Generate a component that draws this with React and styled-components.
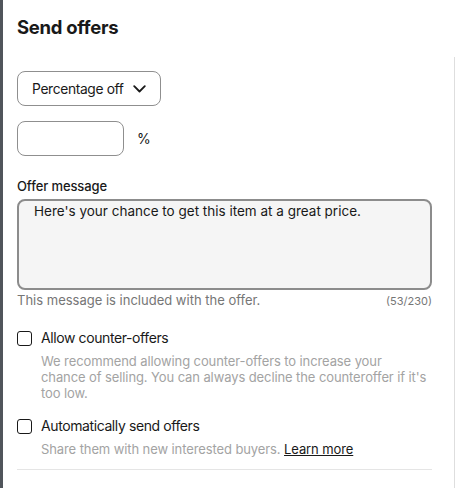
import React from "react";
import styled, { createGlobalStyle } from "styled-components";

const GlobalStyle = createGlobalStyle`
  *, *::before, *::after {
    box-sizing: border-box;
  }
  html, body {
    margin: 0;
    padding: 0;
    background: #ffffff;
  }
  body {
    font-family: Inter, "Noto Sans", "Liberation Sans", sans-serif;
    color: #191919;
  }
`;

const Page = styled.div`
  display: flex;
  height: 488px;
  width: 459px;
  overflow: hidden;
  background: #fff;
`;

/* the dimmed page behind the sheet */
const Backdrop = styled.div`
  width: 3px;
  flex-shrink: 0;
  background: #50555b;
`;

const Sheet = styled.div`
  flex: 1;
  display: flex;
`;

const Content = styled.div`
  flex: 1;
  padding: 16px 22px 0 14px;
`;

const Scrollbar = styled.div`
  width: 1px;
  margin: 57px 4px 0 0;
  background: #dedede;
`;

const Title = styled.h2`
  margin: 0;
  font-size: 18.5px;
  font-weight: 700;
  letter-spacing: -0.3px;
  line-height: 22px;
`;

const Select = styled.button`
  display: flex;
  align-items: center;
  gap: 9px;
  margin-top: 33px;
  height: 35px;
  padding: 0 14px 0 14px;
  border: 1px solid #8f8f8f;
  border-radius: 8px;
  background: #fff;
  font: inherit;
  font-size: 13.8px;
  color: #191919;
  letter-spacing: -0.35px;

  & svg {
    width: 13px;
    height: 8px;
  }
`;

const AmountRow = styled.div`
  display: flex;
  align-items: center;
  gap: 13px;
  margin-top: 15px;
  font-size: 14px;
`;

const AmountInput = styled.div`
  width: 107px;
  height: 35px;
  border: 1px solid #8f8f8f;
  border-radius: 8px;
`;

const Label = styled.div`
  margin-top: 22px;
  font-size: 13px;
  font-weight: 500;
  letter-spacing: -0.1px;
`;

const TextArea = styled.div`
  margin-top: 5px;
  height: 91px;
  padding: 2px 15px;
  border: 2px solid #8c8c8c;
  border-radius: 8px;
  background: #f5f5f5;
  font-size: 13.5px;
`;

const Helper = styled.div`
  display: flex;
  justify-content: space-between;
  align-items: baseline;
  margin-top: 2px;
  font-size: 13px;
  color: #767676;
`;

const Count = styled.span`
  font-size: 11px;
`;

const Option = styled.div`
  display: grid;
  grid-template-columns: 15px 1fr;
  column-gap: 9px;
  margin-top: ${(p) => p.$top}px;
`;

const Box = styled.span`
  width: 15px;
  height: 15px;
  margin-top: 1px;
  border: 1.5px solid #191919;
  border-radius: 3px;
`;

const OptionTitle = styled.div`
  font-size: 14px;
  line-height: 16px;
  letter-spacing: -0.4px;
`;

const OptionText = styled.div`
  grid-column: 2;
  margin-top: 7px;
  font-size: 13px;
  line-height: 16px;
  letter-spacing: -0.1px;
  color: #a3a3a3;
`;

const Link = styled.a`
  color: #191919;
  text-decoration: underline;
`;

const Divider = styled.hr`
  margin: 12px 0 0;
  border: none;
  border-top: 1px solid #e5e5e5;
`;

function Chevron() {
  return (
    <svg viewBox="0 0 13 8" fill="none" stroke="#191919" strokeWidth="1.8" strokeLinecap="round" strokeLinejoin="round">
      <path d="M1.2 1.2l5.3 5.3 5.3-5.3" />
    </svg>
  );
}

export default function App() {
  return (
    <Page>
      <GlobalStyle />
      <Backdrop />
      <Sheet>
        <Content>
          <Title>Send offers</Title>
          <Select>
            Percentage off
            <Chevron />
          </Select>
          <AmountRow>
            <AmountInput />
            %
          </AmountRow>
          <Label>Offer message</Label>
          <TextArea>Here's your chance to get this item at a great price.</TextArea>
          <Helper>
            <span>This message is included with the offer.</span>
            <Count>(53/230)</Count>
          </Helper>
          <Option $top={22}>
            <Box />
            <OptionTitle>Allow counter-offers</OptionTitle>
            <OptionText>
              We recommend allowing counter-offers to increase your
              <br />
              chance of selling. You can always decline the counteroffer if it's
              too low.
            </OptionText>
          </Option>
          <Option $top={17}>
            <Box />
            <OptionTitle>Automatically send offers</OptionTitle>
            <OptionText>
              Share them with new interested buyers. <Link>Learn more</Link>
            </OptionText>
          </Option>
          <Divider />
        </Content>
        <Scrollbar />
      </Sheet>
    </Page>
  );
}
